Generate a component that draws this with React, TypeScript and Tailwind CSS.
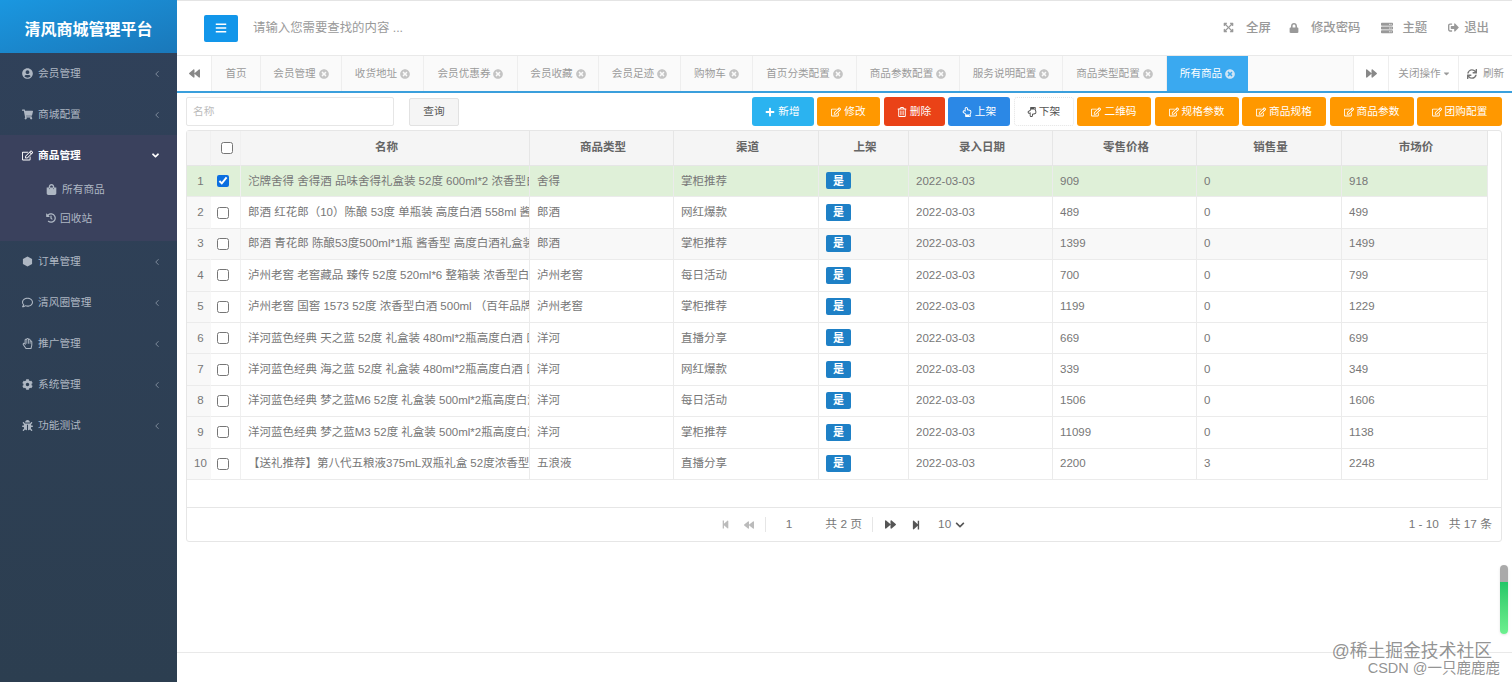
import { ChevronLeft } from 'lucide-react';
import {
  FaAngleDown,
  FaBackward,
  FaBars,
  FaBug,
  FaCaretDown,
  FaChevronDown,
  FaCog,
  FaExpandArrowsAlt,
  FaForward,
  FaHistory,
  FaLock,
  FaPlus,
  FaRegComment,
  FaRegEdit,
  FaRegHandPaper,
  FaRegHandPointDown,
  FaRegHandPointUp,
  FaRegTrashAlt,
  FaServer,
  FaShoppingBag,
  FaShoppingCart,
  FaSignOutAlt,
  FaStepBackward,
  FaStepForward,
  FaSync,
  FaTimesCircle,
  FaUserCircle,
} from 'react-icons/fa';

const tabs = [
  { label: '首页', width: 'w-[49px]', close: false },
  { label: '会员管理', width: 'w-[81px]', close: true },
  { label: '收货地址', width: 'w-[82px]', close: true },
  { label: '会员优惠券', width: 'w-[94px]', close: true },
  { label: '会员收藏', width: 'w-[81px]', close: true },
  { label: '会员足迹', width: 'w-[82px]', close: true },
  { label: '购物车', width: 'w-[72px]', close: true },
  { label: '首页分类配置', width: 'w-[104px]', close: true },
  { label: '商品参数配置', width: 'w-[103px]', close: true },
  { label: '服务说明配置', width: 'w-[103px]', close: true },
  { label: '商品类型配置', width: 'w-[104px]', close: true },
];

const rows = [
  ['沱牌舍得 舍得酒 品味舍得礼盒装 52度 600ml*2 浓香型白酒', '舍得', '掌柜推荐', '909', '0', '918'],
  ['郎酒 红花郎（10）陈酿 53度 单瓶装 高度白酒 558ml 酱香型', '郎酒', '网红爆款', '489', '0', '499'],
  ['郎酒 青花郎 陈酿53度500ml*1瓶 酱香型 高度白酒礼盒装', '郎酒', '掌柜推荐', '1399', '0', '1499'],
  ['泸州老窖 老窖藏品 臻传 52度 520ml*6 整箱装 浓香型白酒', '泸州老窖', '每日活动', '700', '0', '799'],
  ['泸州老窖 国窖 1573 52度 浓香型白酒 500ml （百年品牌）', '泸州老窖', '掌柜推荐', '1199', '0', '1229'],
  ['洋河蓝色经典 天之蓝 52度 礼盒装 480ml*2瓶高度白酒 口感绵柔', '洋河', '直播分享', '669', '0', '699'],
  ['洋河蓝色经典 海之蓝 52度 礼盒装 480ml*2瓶高度白酒 口感绵柔', '洋河', '网红爆款', '339', '0', '349'],
  ['洋河蓝色经典 梦之蓝M6 52度 礼盒装 500ml*2瓶高度白酒', '洋河', '每日活动', '1506', '0', '1606'],
  ['洋河蓝色经典 梦之蓝M3 52度 礼盒装 500ml*2瓶高度白酒', '洋河', '掌柜推荐', '11099', '0', '1138'],
  ['【送礼推荐】第八代五粮液375mL双瓶礼盒 52度浓香型白酒', '五浪液', '直播分享', '2200', '3', '2248'],
];

function HexIcon() {
  return (
    <svg viewBox="0 0 12 12" className="h-[11px] w-[11px]" fill="currentColor">
      <polygon points="6,0.5 11,3.2 11,8.8 6,11.5 1,8.8 1,3.2" />
    </svg>
  );
}

function MenuItem({ icon, label }: { icon: React.ReactNode; label: string }) {
  return (
    <div className="flex h-[41px] items-center pl-[22px] pr-[15px] text-[#aeb7c3]">
      <span className="flex w-[16px] items-center text-[11px]">{icon}</span>
      <span className="text-[10.7px]">{label}</span>
      <ChevronLeft size={10} strokeWidth={1.5} className="ml-auto" />
    </div>
  );
}

function Sidebar() {
  return (
    <aside className="flex w-[177px] shrink-0 flex-col bg-gradient-to-b from-[#30415a] to-[#2c3e50]">
      <div className="flex h-[53px] shrink-0 items-center justify-center bg-gradient-to-br from-[#1a97e0] to-[#1a78ba] pt-[7px] text-[16px] font-bold text-white">
        清风商城管理平台
      </div>
      <MenuItem icon={<FaUserCircle />} label="会员管理" />
      <MenuItem icon={<FaShoppingCart />} label="商城配置" />
      <div className="bg-[#3a415d] pb-[8px]">
        <div className="flex h-[41px] items-center pl-[22px] pr-[16px] font-bold text-white">
          <span className="flex w-[16px] items-center text-[11px]">
            <FaRegEdit />
          </span>
          <span className="text-[10.7px]">商品管理</span>
          <FaAngleDown className="ml-auto text-[11px]" />
        </div>
        <div className="flex h-[27px] items-center pl-[46px] text-[10.7px] text-[#aeb7c3]">
          <FaShoppingBag className="mr-[5px] text-[11px]" />
          所有商品
        </div>
        <div className="flex h-[30px] items-center pl-[46px] text-[10.7px] text-[#aeb7c3]">
          <FaHistory className="mr-[4px] text-[10px]" />
          回收站
        </div>
      </div>
      <MenuItem icon={<HexIcon />} label="订单管理" />
      <MenuItem icon={<FaRegComment />} label="清风圈管理" />
      <MenuItem icon={<FaRegHandPaper />} label="推广管理" />
      <MenuItem icon={<FaCog />} label="系统管理" />
      <MenuItem icon={<FaBug />} label="功能测试" />
    </aside>
  );
}

function TopBar() {
  return (
    <header className="flex h-[55px] shrink-0 items-center border-t border-t-[#e4e4e4] bg-white pl-[27px] pr-[21px] text-[12.4px] text-[#999]">
      <button className="flex h-[27px] w-[34px] items-center justify-center rounded-[2px] bg-[#1296ea] text-[12px] text-white">
        <FaBars />
      </button>
      <span className="ml-[15px] text-[#9a9a9a]">请输入您需要查找的内容 ...</span>
      <div className="ml-auto flex items-center pr-[2px] font-medium">
        <FaExpandArrowsAlt className="text-[11px]" />
        <span className="ml-[12px]">全屏</span>
        <FaLock className="ml-[18px] text-[10px]" />
        <span className="ml-[12px]">修改密码</span>
        <FaServer className="ml-[21px] text-[12px]" />
        <span className="ml-[9px]">主题</span>
        <FaSignOutAlt className="ml-[21px] text-[11px]" />
        <span className="ml-[5px]">退出</span>
      </div>
    </header>
  );
}

function Tabs() {
  return (
    <div className="flex h-[38px] shrink-0 border-y border-b-2 border-t-[#e9e9e9] border-b-[#3a9fdc] bg-[#fafafa] text-[10.6px] text-[#9a9a9a]">
      <button className="flex w-[35px] items-center justify-center border-r border-[#eeeeee] bg-white text-[11px] text-[#888]">
        <FaBackward />
      </button>
      {tabs.map((tab) => (
        <div
          key={tab.label}
          className={`flex items-center justify-center gap-[3px] border-r border-[#eeeeee] ${tab.width}`}
        >
          {tab.label}
          {tab.close && <FaTimesCircle className="text-[10px] text-[#c4c4c4]" />}
        </div>
      ))}
      <div className="flex w-[81px] items-center justify-center gap-[3px] bg-[#3aa9f0] text-white">
        所有商品
        <FaTimesCircle className="text-[10px] text-[#cfe4f5]" />
      </div>
      <div className="ml-auto flex bg-white">
        <button className="flex w-[36px] items-center justify-center border-x border-[#eeeeee] text-[11px] text-[#888]">
          <FaForward />
        </button>
        <div className="flex w-[70px] items-center justify-center gap-[1px] border-r border-[#eeeeee] pl-[2px]">
          关闭操作
          <FaCaretDown className="text-[9px]" />
        </div>
        <div className="flex w-[53px] items-center justify-center gap-[6px]">
          <FaSync className="text-[10px] text-[#777]" />
          刷新
        </div>
      </div>
    </div>
  );
}

function ActionButton({ color, icon, label, width }: { color: string; icon: React.ReactNode; label: string; width: string }) {
  return (
    <button className={`flex h-[29px] items-center justify-center gap-[3px] rounded-[3px] text-[10.7px] text-white ${color} ${width}`}>
      <span className="text-[10px]">{icon}</span>
      {label}
    </button>
  );
}

function Toolbar() {
  return (
    <div className="flex h-[29px] items-center text-[10.7px]">
      <div className="flex h-[29px] w-[208px] items-center rounded-[2px] border border-[#e6e6e6] pl-[6px] text-[#bbbbbb]">
        名称
      </div>
      <button className="ml-[15px] h-[28px] w-[50px] rounded-[2px] border border-[#e2e2e2] bg-[#f5f5f5] text-[#555]">
        查询
      </button>
      <div className="ml-auto flex gap-[3.5px]">
        <ActionButton color="bg-[#2bb3f0]" icon={<FaPlus />} label="新增" width="w-[62px]" />
        <ActionButton color="bg-[#ff9800]" icon={<FaRegEdit />} label="修改" width="w-[63px]" />
        <ActionButton color="bg-[#ea4217]" icon={<FaRegTrashAlt />} label="删除" width="w-[61px]" />
        <ActionButton color="bg-[#2b88e6]" icon={<FaRegHandPointUp />} label="上架" width="w-[62px]" />
        <button className="flex h-[29px] w-[60px] items-center justify-center gap-[2px] rounded-[3px] border border-dotted border-[#e4e4e4] text-[#555]">
          <FaRegHandPointDown className="text-[10px]" />
          下架
        </button>
        <ActionButton color="bg-[#ff9800]" icon={<FaRegEdit />} label="二维码" width="w-[74px]" />
        <ActionButton color="bg-[#ff9800]" icon={<FaRegEdit />} label="规格参数" width="w-[84px]" />
        <ActionButton color="bg-[#ff9800]" icon={<FaRegEdit />} label="商品规格" width="w-[84px]" />
        <ActionButton color="bg-[#ff9800]" icon={<FaRegEdit />} label="商品参数" width="w-[84px]" />
        <ActionButton color="bg-[#ff9800]" icon={<FaRegEdit />} label="团购配置" width="w-[85px]" />
      </div>
    </div>
  );
}

const thClass = 'border-r border-b border-[#e6e6e6] pl-[3px] text-center text-[11.5px] font-bold text-[#666]';
const thSoftClass = 'border-r border-b border-b-[#e6e6e6] border-r-[#f0f0f0]';
const tdClass = 'overflow-hidden whitespace-nowrap border-r border-b border-[#ebebeb] px-[7px]';

function ProductTable() {
  return (
    <table className="w-[1301px] table-fixed border-separate border-spacing-0 text-[11.5px] text-[#777]">
      <colgroup>
        <col className="w-[24px]" />
        <col className="w-[30px]" />
        <col className="w-[289px]" />
        <col className="w-[144px]" />
        <col className="w-[145px]" />
        <col className="w-[90px]" />
        <col className="w-[144px]" />
        <col className="w-[144px]" />
        <col className="w-[145px]" />
        <col className="w-[146px]" />
      </colgroup>
      <thead>
        <tr className="h-[35px] bg-[#f5f5f5]">
          <th className={thSoftClass} />
          <th className={thSoftClass}>
            <input type="checkbox" readOnly className="ml-[10px] block h-[12px] w-[12px]" />
          </th>
          <th className={thClass}>名称</th>
          <th className={thClass}>商品类型</th>
          <th className={thClass}>渠道</th>
          <th className={thClass}>上架</th>
          <th className={thClass}>录入日期</th>
          <th className={thClass}>零售价格</th>
          <th className={thClass}>销售量</th>
          <th className={thClass}>市场价</th>
        </tr>
      </thead>
      <tbody>
        {rows.map((row, i) => {
          const bg = i === 0 ? 'bg-[#dff0d8]' : i === 2 ? 'bg-[#f8f8f8]' : 'bg-white';
          return (
            <tr key={row[0]} className={`h-[31.4px] ${bg}`}>
              <td className={`border-b border-r border-b-[#ebebeb] border-r-transparent pl-[4px] text-center ${i === 0 ? '' : 'bg-[#f8f8f8]'}`}>
                {i + 1}
              </td>
              <td className="border-b border-r border-b-[#ebebeb] border-r-[#f0f0f0]">
                <input
                  type="checkbox"
                  readOnly
                  checked={i === 0}
                  className="ml-[6px] block h-[12px] w-[12px] accent-[#0b6fe0]"
                />
              </td>
              <td className={tdClass}>{row[0]}</td>
              <td className={tdClass}>{row[1]}</td>
              <td className={tdClass}>{row[2]}</td>
              <td className={tdClass}>
                <span className="inline-flex h-[17px] w-[25px] items-center justify-center rounded-[2px] bg-[#1e80c6] text-[11px] font-bold text-white">
                  是
                </span>
              </td>
              <td className={tdClass}>2022-03-03</td>
              <td className={tdClass}>{row[3]}</td>
              <td className={tdClass}>{row[4]}</td>
              <td className={tdClass}>{row[5]}</td>
            </tr>
          );
        })}
      </tbody>
    </table>
  );
}

function Pager() {
  return (
    <div className="grid h-[34px] grid-cols-[1fr_auto_1fr] items-center border-t border-[#e6e6e6] pr-[9px] text-[11.8px] text-[#777]">
      <div />
      <div className="flex items-center pl-[7px]">
        <FaStepBackward className="text-[9px] text-[#bbbbbb]" />
        <FaBackward className="ml-[14px] text-[10px] text-[#bbbbbb]" />
        <span className="ml-[11px] h-[15px] border-l border-[#e6e6e6]" />
        <span className="ml-[20px]">1</span>
        <span className="ml-[33px]">共 2 页</span>
        <span className="ml-[10px] h-[15px] border-l border-[#e6e6e6]" />
        <FaForward className="ml-[12px] text-[11px] text-[#555]" />
        <FaStepForward className="ml-[15px] text-[10px] text-[#555]" />
        <span className="ml-[17px]">10</span>
        <FaChevronDown className="ml-[4px] text-[10px] text-[#555]" />
      </div>
      <div className="text-right">1 - 10&nbsp;&nbsp;&nbsp;共 17 条</div>
    </div>
  );
}

export default function App() {
  return (
    <div className="relative flex h-[682px] w-[1512px] overflow-hidden bg-white font-['Liberation_Sans','Noto_Sans_CJK_SC',sans-serif]">
      <Sidebar />
      <main className="flex min-w-0 flex-1 flex-col">
        <TopBar />
        <Tabs />
        <div className="flex-1 pl-[9px] pr-[10px] pt-[4px]">
          <Toolbar />
          <div className="mt-[4px] rounded-[3px] border border-[#e6e6e6]">
            <div className="h-[376px]">
              <ProductTable />
            </div>
            <Pager />
          </div>
        </div>
        <div className="h-[30px] shrink-0 border-t border-[#e9e9e9]" />
      </main>

      {/* page scrollbar and image watermarks sit on top */}
      <div className="absolute left-[1500px] top-[565px] h-[69px] w-[8px] rounded-full bg-gradient-to-b from-[#aaaaaa] from-25% via-[#22c768] via-25% to-[#6cf08f] shadow" />
      <div className="absolute right-[20px] top-[641px] whitespace-nowrap text-[17.8px] leading-[20px] text-[#777]/80">
        @稀土掘金技术社区
      </div>
      <div className="absolute right-[12px] top-[659px] whitespace-nowrap text-[14.5px] leading-[18px] text-[#777]/80">
        CSDN @一只鹿鹿鹿
      </div>
    </div>
  );
}
